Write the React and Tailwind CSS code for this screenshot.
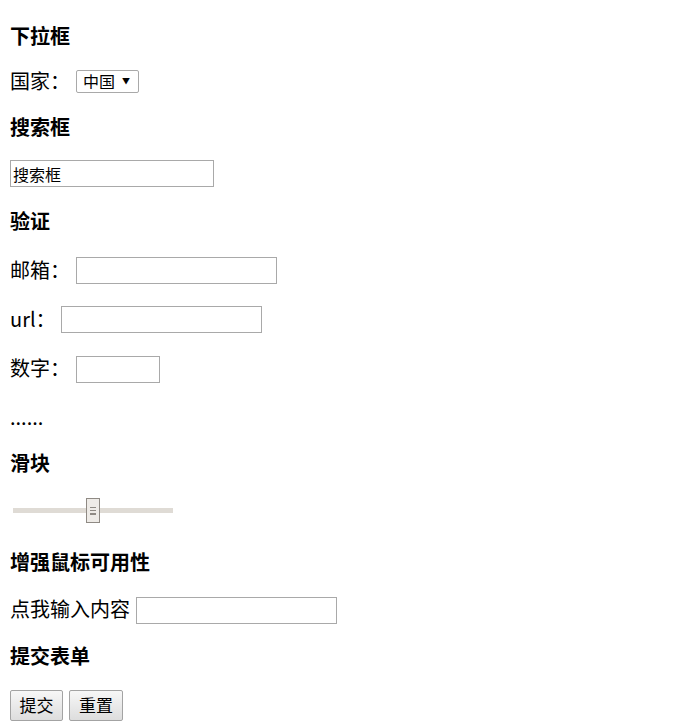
import React, { useState } from 'react';

const font = { fontFamily: '"Noto Sans CJK SC", "Noto Sans", sans-serif' };

const Heading = ({ children, h }) => (
    <div className={`flex items-center text-[20px] font-bold text-black ${h}`}>{children}</div>
);

const Row = ({ children, h }) => (
    <div className={`flex items-center text-[20px] text-black ${h}`}>{children}</div>
);

const TextBox = ({ w, value, onChange, placeholder, type = 'text' }) => (
    <input
        type={type}
        value={value}
        onChange={onChange}
        placeholder={placeholder}
        className={`h-[27px] ${w} border border-[#a9a9a9] bg-white px-[2px] text-[16px] text-black outline-none [appearance:textfield]`}
    />
);

const Slider = ({ value }) => (
    <div className="relative ml-[3px] flex h-[25px] w-[160px] items-center">
        <div className="h-[5px] w-full bg-[#dfdbd5]" />
        <div
            className="absolute top-0 flex h-[25px] w-[14px] flex-col items-center justify-center gap-[2px] border border-[#8f8a84] bg-[#eeebe7]"
            style={{ left: `${value * 1.46}px` }}
        >
            <span className="h-px w-[6px] bg-[#8f8a84]" />
            <span className="h-px w-[6px] bg-[#8f8a84]" />
            <span className="h-[2px] w-[6px] bg-[#8f8a84]" />
        </div>
    </div>
);

const App = () => {
    const [country, setCountry] = useState('cn');
    const [search, setSearch] = useState('搜索框');
    const [email, setEmail] = useState('');
    const [url, setUrl] = useState('');
    const [num, setNum] = useState('');
    const [text, setText] = useState('');

    return (
        <div className="bg-white px-[10px] pt-[13px]" style={font}>
            <Heading h="h-[45px]">下拉框</Heading>
            <Row h="h-[46px]">
                <span>国家：</span>
                <div className="relative ml-[6px] inline-flex">
                    <select
                        value={country}
                        onChange={(e) => setCountry(e.target.value)}
                        className="h-[23px] w-[63px] appearance-none rounded-[2px] border border-[#a9a9a9] bg-white pl-[6px] text-[16px] leading-none text-black outline-none"
                    >
                        <option value="cn">中国</option>
                        <option value="us">美国</option>
                    </select>
                    <span className="pointer-events-none absolute right-[9px] top-[7px] text-[8px] leading-none">▼</span>
                </div>
            </Row>
            <Heading h="h-[46px]">搜索框</Heading>
            <Row h="h-[47px]">
                <TextBox w="w-[204px]" value={search} onChange={(e) => setSearch(e.target.value)} />
            </Row>
            <Heading h="h-[48px]">验证</Heading>
            <Row h="h-[49px]">
                <span>邮箱：</span>
                <span className="ml-[6px]">
                    <TextBox type="email" w="w-[201px]" value={email} onChange={(e) => setEmail(e.target.value)} />
                </span>
            </Row>
            <Row h="h-[49px]">
                <span>url：</span>
                <span className="ml-[5px]">
                    <TextBox type="url" w="w-[201px]" value={url} onChange={(e) => setUrl(e.target.value)} />
                </span>
            </Row>
            <Row h="h-[50px]">
                <span>数字：</span>
                <span className="ml-[6px]">
                    <TextBox type="number" w="w-[84px]" value={num} onChange={(e) => setNum(e.target.value)} />
                </span>
            </Row>
            <Row h="h-[47px]">......</Row>
            <Heading h="h-[46px]">滑块</Heading>
            <Row h="h-[49px]">
                <Slider value={50} />
            </Row>
            <Heading h="h-[53px] pt-[1px]">增强鼠标可用性</Heading>
            <Row h="h-[42px]">
                <label htmlFor="clickme">点我输入内容</label>
                <span className="ml-[6px]">
                    <input
                        id="clickme"
                        value={text}
                        onChange={(e) => setText(e.target.value)}
                        className="h-[27px] w-[201px] border border-[#a9a9a9] bg-white px-[2px] text-[16px] outline-none"
                    />
                </span>
            </Row>
            <Heading h="h-[52px]">提交表单</Heading>
            <div className="flex h-[46px] items-center gap-[6px]">
                <button className="h-[31px] w-[53px] rounded-[2px] border border-[#a3a3a3] bg-gradient-to-b from-[#f7f7f7] to-[#dddddd] text-[17px] text-black">
                    提交
                </button>
                <button className="h-[31px] w-[54px] rounded-[2px] border border-[#a3a3a3] bg-gradient-to-b from-[#f7f7f7] to-[#dddddd] text-[17px] text-black">
                    重置
                </button>
            </div>
        </div>
    );
};

export default App;
